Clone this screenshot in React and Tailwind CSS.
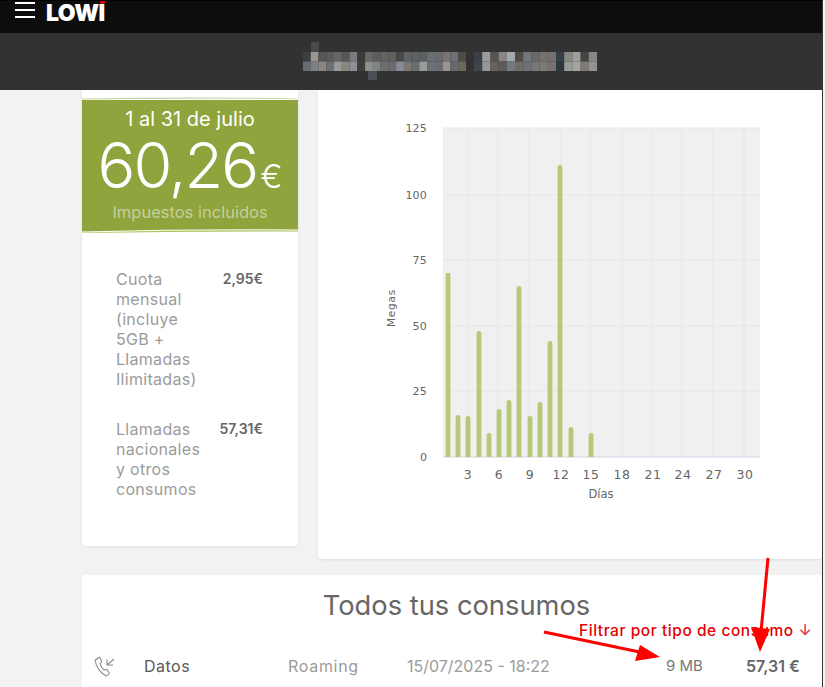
const font = "font-['Inter','Noto_Sans',sans-serif]"

const row1a = ['#3a3f42','#99978f','#555555','#5c5c5c','#666666','#585858','#777b7e','#3c3a38','#666a6b','#5f5c5a','#5f6467','#625f5c','#4a4845','#5d6468','#5e6062','#5c5f60','#687074','#6b6a70','#7a7370','#6e6f72','#4f4c48']
const row2a = ['#666c72','#7c8084','#8b8780','#6a7075','#9a9a9a','#8a8680','#8b9096','#403d38','#8a9190','#82847f','#6d6c6e','#6c6b6d','#868d98','#7a7774','#6b6c6e','#9a9c9a','#6d7276','#6b6e74','#9a9494','#66686e','#6a6858']
const row1b = ['#3a404a','#9c9c9a','#565450','#8a8582','#a0aaad','#4f4c44','#73777a','#6c686a','#777270','#757070','#363e4a','#858a84','#a09e9a','#444444','#8a8684']
const row2b = ['#3f444e','#949896','#66625e','#5e5a56','#747a80','#6e6c66','#6c7274','#7a7676','#7c7a74','#76706e','#2e3640','#969c96','#a4a69e','#7e7a76','#96908e']

function Mosaic() {
  return (
    <svg width="300" height="40" viewBox="300 42 300 40" className="block">
      <rect x="311" y="42" width="8" height="10" fill="#4a4a4a" />
      <rect x="368" y="71" width="9" height="9" fill="#4c5054" />
      {row1a.map((c, i) => <rect key={i} x={303 + i * 7.76} y="52" width="7.8" height="9.5" fill={c} />)}
      {row2a.map((c, i) => <rect key={i} x={303 + i * 7.76} y="61.5" width="7.8" height="9.5" fill={c} />)}
      {row1b.map((c, i) => <rect key={i} x={474 + i * 8.2} y="52" width="8.25" height="9.5" fill={c} />)}
      {row2b.map((c, i) => <rect key={i} x={474 + i * 8.2} y="61.5" width="8.25" height="9.5" fill={c} />)}
    </svg>
  )
}

const bars = [[448,272.7],[458,415],[468,416],[479,331],[489,433],[499,409],[509,400],[519,286],[530,416],[540,402],[550,341],[560,165],[571,427],[591,433]]
const vlines = [468,498,529,561,590,622,652,682,713,744]
const hlines = [[128,'125'],[195,'100'],[260,'75'],[326,'50'],[391,'25']]
const xlabels = [[468,'3'],[499,'6'],[530,'9'],[561,'12'],[591,'15'],[622,'18'],[653,'21'],[683,'24'],[714,'27'],[745,'30']]

function Chart() {
  return (
    <svg width="400" height="400" viewBox="380 110 400 400" className="block" fontFamily="'DejaVu Sans', sans-serif">
      <rect x="443" y="128" width="317" height="329" fill="#f0f0f0" />
      {vlines.map((x) => <line key={x} x1={x} x2={x} y1="128" y2="457" stroke="#e6e6e6" />)}
      {hlines.map(([y, t]) => (
        <g key={t}>
          <line x1="443" x2="760" y1={y} y2={y} stroke="#e6e6e6" />
          <text x="427" y={y + 4} textAnchor="end" fontSize="11" letterSpacing="0.2" fill="#666666">{t}</text>
        </g>
      ))}
      <text x="427" y="461" textAnchor="end" fontSize="11" fill="#666666">0</text>
      <line x1="443" x2="760" y1="457" y2="457" stroke="#ccd6eb" />
      {bars.map(([x, y]) => <path key={x} d={`M${x - 2.4} 457V${y + 2}a2.4 2 0 0 1 4.8 0V457z`} fill="#b7c977" />)}
      {xlabels.map(([x, t]) => <text key={t} x={x} y="479" textAnchor="middle" fontSize="12.5" letterSpacing="0.6" fill="#666666">{t}</text>)}
      <text x="601" y="498" textAnchor="middle" fontSize="11.5" fill="#666666">Días</text>
      <text transform="translate(395 308) rotate(-90)" textAnchor="middle" fontSize="10.5" letterSpacing="0.8" fill="#666666">Megas</text>
    </svg>
  )
}

function PriceBand() {
  return (
    <div className="relative h-[136px] text-center text-white">
      <svg className="absolute inset-0" width="216" height="136" viewBox="0 0 216 136" preserveAspectRatio="none">
        <path d="M0 1.5Q108 -0.5 216 1.5V2.2Q108 1 0 2.5z" fill="#c9d5a3" />
        <path d="M0 3H216V132.5Q108 131.5 0 134.5z" fill="#8fa43d" />
        <path d="M0 135.5Q108 132.5 216 133.5V134.5Q108 134 0 136z" fill="#b0c25c" />
      </svg>
      <div className="relative pt-[10px] text-[20px] leading-6">1 al 31 de julio</div>
      <div className="relative mt-[3px] flex items-baseline justify-center leading-[62px]">
        <span className="text-[63px] font-light tracking-[-2px]">60,26</span>
        <span className="ml-[3px] text-[33px] font-light">€</span>
      </div>
      <div className="relative mt-[-5px] text-[16.5px] leading-5 text-[#c4d09a]">Impuestos incluidos</div>
    </div>
  )
}

function Fee({ label, price }) {
  return (
    <div className="flex justify-between">
      <div className="w-[90px] text-[16px] leading-5 tracking-[0.3px] text-[#9b9b9b]">{label}</div>
      <div className="text-[14px] font-semibold leading-5 text-[#666666]">{price}</div>
    </div>
  )
}

export default function App() {
  return (
    <div className={`relative flex h-[687px] w-[825px] overflow-hidden bg-[#f2f2f2] ${font}`}>
      <div className="flex w-[822px] flex-col">
        <header className="h-[33px] shrink-0 border-t border-black bg-[#0d0d0d]">
          <div className="flex items-start pl-[15px]">
            <div className="mt-[1px] flex w-[20px] flex-col gap-[5px]">
              <span className="h-[2px] bg-white" />
              <span className="h-[2px] bg-white" />
              <span className="h-[2px] bg-white" />
            </div>
            <div className="relative ml-[11px] mt-[2px] text-[23px] font-black leading-[20px] tracking-[-0.5px] text-white">
              LOWI
              <span className="absolute right-[0px] top-[-2px] h-[3px] w-[5px] rounded-b-full bg-[#e2001a]" />
            </div>
          </div>
        </header>
        <div className="flex h-[57px] shrink-0 items-center bg-[#323232] pl-[300px]">
          <Mosaic />
        </div>
        <main className="shrink-0 pl-[82px]">
          <div className="flex items-start gap-[20px]">
            <section className="h-[456px] w-[216px] rounded-b-[4px] bg-white pt-[7px] shadow-[0_1px_3px_rgba(0,0,0,0.08)]">
              <PriceBand />
              <div className="flex flex-col gap-[30px] pl-[34px] pr-[35px] pt-[36px]">
                <Fee label="Cuota mensual (incluye 5GB + Llamadas Ilimitadas)" price="2,95€" />
                <Fee label="Llamadas nacionales y otros consumos" price="57,31€" />
              </div>
            </section>
            <section className="h-[469px] flex-1 rounded-b-[4px] bg-white pl-[62px] pt-[20px] shadow-[0_1px_3px_rgba(0,0,0,0.08)]">
              <Chart />
            </section>
          </div>
          <section className="mt-[16px] h-[112px] rounded-t-[4px] bg-white pt-[15px]">
            <h2 className="pl-[9px] text-center text-[27.3px] leading-8 text-[#666666]">Todos tus consumos</h2>
            <div className="mt-[32px] flex items-center text-[16px] leading-6">
              <svg className="ml-[12px] mr-[29px] shrink-0" width="21" height="21" viewBox="0 0 21 21" fill="none" stroke="#8c8c8c" strokeWidth="1.1">
                <path d="M1 4.5 4.5 1.5c.6-.4 1.2-.2 1.5.3l1.6 3.4c.2.5 0 1-.4 1.3L6 7.4c.5 2.6 2 5 4.3 6.8l1.5-.7c.5-.2 1-.1 1.3.3l2 2.9c.3.5.2 1-.2 1.4l-2.7 1.8C7 18 2.2 11 1 4.5z" />
                <path d="M20 3 13 9M13 3.5V9h6" />
              </svg>
              <span className="w-[144px] tracking-[0.5px] text-[#595959]">Datos</span>
              <span className="w-[119px] tracking-[0.7px] text-[#9b9b9b]">Roaming</span>
              <span className="w-[259px] text-[#9b9b9b]">15/07/2025 - 18:22</span>
              <span className="w-[80px] text-[15px] text-[#777777]">9 MB</span>
              <span className="font-semibold text-[#666666]">57,31 €</span>
            </div>
          </section>
        </main>
      </div>
      <div className="w-[1px] bg-[#333333]" />
      <div className="flex-1 bg-[#f5f5f5]" />

      <div className="absolute left-[579px] top-[621px] whitespace-nowrap text-[15.5px] font-medium leading-5 tracking-[0.55px] text-[#e60000]">
        Filtrar por tipo de consumo <span className="text-[#e0374a]">↓</span>
      </div>
      <svg className="absolute inset-0" width="825" height="687" viewBox="0 0 825 687">
        <path d="M544 632 642 652.5" stroke="#ff0000" strokeWidth="3" />
        <path d="M660 657 640 645 635 661z" fill="#ff0000" />
        <path d="M768 558 761 632" stroke="#ff0000" strokeWidth="3" />
        <path d="M760 652 751 627 770 629z" fill="#ff0000" />
      </svg>
    </div>
  )
}
